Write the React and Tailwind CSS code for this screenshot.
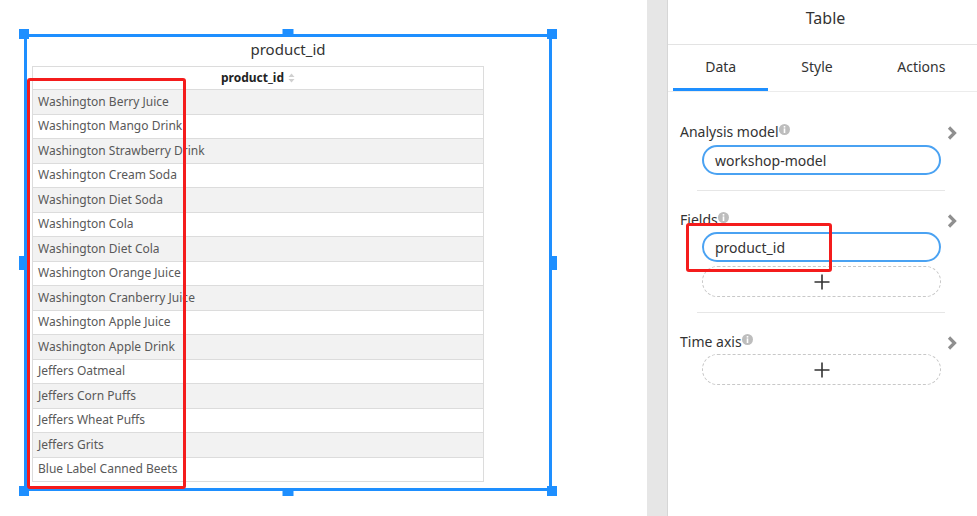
const rows = [
  'Washington Berry Juice',
  'Washington Mango Drink',
  'Washington Strawberry Drink',
  'Washington Cream Soda',
  'Washington Diet Soda',
  'Washington Cola',
  'Washington Diet Cola',
  'Washington Orange Juice',
  'Washington Cranberry Juice',
  'Washington Apple Juice',
  'Washington Apple Drink',
  'Jeffers Oatmeal',
  'Jeffers Corn Puffs',
  'Jeffers Wheat Puffs',
  'Jeffers Grits',
  'Blue Label Canned Beets',
]

function SortIcon() {
  return (
    <svg width="7" height="10" viewBox="0 0 7 10" className="ml-[4px]">
      <path d="M3.5 0.5 L6.5 4 L0.5 4 Z" fill="#d0d0d0" />
      <path d="M3.5 9.5 L6.5 6 L0.5 6 Z" fill="#d0d0d0" />
    </svg>
  )
}

function InfoIcon() {
  return (
    <svg width="11" height="11" viewBox="0 0 11 11" className="-mt-[4px]">
      <circle cx="5.5" cy="5.5" r="5.5" fill="#bdbdbd" />
      <rect x="4.7" y="2" width="1.6" height="1.6" fill="#fff" />
      <rect x="4.7" y="4.4" width="1.6" height="4.6" fill="#fff" />
    </svg>
  )
}

function Chevron() {
  return (
    <svg width="10" height="14" viewBox="0 0 10 14" className="mt-[3px] mr-[8px]">
      <path d="M2 1.5 L7.5 7 L2 12.5" fill="none" stroke="#8f8f8f" strokeWidth="3.2" />
    </svg>
  )
}

function Plus() {
  return (
    <svg width="16" height="16" viewBox="0 0 16 16">
      <path d="M8 0.5 V15.5 M0.5 8 H15.5" stroke="#333" strokeWidth="1.6" />
    </svg>
  )
}

function Label({ text }) {
  return (
    <div className="flex items-center justify-between h-[20px]">
      <div className="flex items-center text-[14px] text-[#333]">
        {text}
        <InfoIcon />
      </div>
      <Chevron />
    </div>
  )
}

function Pill({ children }) {
  return (
    <div className="ml-[22px] w-[239px] h-[30px] rounded-full border-2 border-[#4aa2f2] flex items-center pl-[11px] text-[14px] text-[#333]">
      {children}
    </div>
  )
}

function AddPill({ className }) {
  return (
    <div className={`ml-[22px] w-[239px] h-[31px] rounded-full border border-dashed border-[#c8c8c8] flex items-center justify-center ${className}`}>
      <Plus />
    </div>
  )
}

export default function App() {
  return (
    <div className="flex h-screen w-full bg-white font-['Noto_Sans',sans-serif] overflow-hidden">
      <div className="relative w-[647px] shrink-0">
        <div className="relative ml-[24px] mt-[34px] w-[528px] h-[457px] border-[3px] border-[#1e8fff]">
          <div className="h-[29px] leading-[25px] text-center text-[15px] text-[#333]">product_id</div>
          <div className="ml-[5px] w-[452px] border-x border-t border-[#dcdcdc]">
            <div className="h-[23px] border-b border-[#dcdcdc] flex items-center justify-center text-[12px] font-bold text-[#222]">
              product_id
              <SortIcon />
            </div>
            {rows.map((r, i) => (
              <div
                key={r}
                className={`h-[24.5px] border-b border-[#dcdcdc] flex items-center pl-[5px] text-[12px] text-[#595959] ${i % 2 === 0 ? 'bg-[#f2f2f2]' : 'bg-white'}`}
              >
                {r}
              </div>
            ))}
          </div>

          <div className="absolute -left-[8px] -top-[8px] w-[10px] h-[10px] bg-[#1e8fff]" />
          <div className="absolute left-1/2 -translate-x-1/2 -top-[8px] w-[11px] h-[8px] bg-[#1e8fff]" />
          <div className="absolute -right-[8px] -top-[8px] w-[10px] h-[10px] bg-[#1e8fff]" />
          <div className="absolute -left-[8px] top-1/2 -translate-y-1/2 w-[8px] h-[14px] bg-[#1e8fff]" />
          <div className="absolute -right-[8px] top-1/2 -translate-y-1/2 w-[8px] h-[14px] bg-[#1e8fff]" />
          <div className="absolute -left-[8px] -bottom-[8px] w-[10px] h-[10px] bg-[#1e8fff]" />
          <div className="absolute left-1/2 -translate-x-1/2 -bottom-[8px] w-[11px] h-[8px] bg-[#1e8fff]" />
          <div className="absolute -right-[8px] -bottom-[8px] w-[10px] h-[10px] bg-[#1e8fff]" />
        </div>

        <div className="absolute left-[27px] top-[78px] w-[159px] h-[411px] border-[3px] border-[#f41c1c] rounded-[3px]" />
      </div>

      <div className="w-[21px] shrink-0 bg-[#e6e6e6] border-r border-[#d6d6d6]" />

      <div className="relative w-[309px] shrink-0 bg-white">
        <div className="h-[45px] border-b border-[#e3e3e3] flex items-center justify-center pl-[6px] pb-[8px] text-[16px] text-[#333]">
          Table
        </div>
        <div className="flex h-[47px] border-b border-[#ececec] pl-[5px] text-[14px] text-[#333]">
          <div className="relative w-[96px] flex items-center justify-center pb-[4px]">
            Data
            <div className="absolute left-0 right-0 bottom-0 h-[3px] bg-[#1e8fff]" />
          </div>
          <div className="w-[98px] flex items-center justify-center pb-[4px]">Style</div>
          <div className="w-[112px] flex items-center justify-center pb-[4px]">Actions</div>
        </div>

        <div className="px-[12px] pt-[29px]">
          <Label text="Analysis model" />
          <div className="mt-[4px]">
            <Pill>workshop-model</Pill>
          </div>
          <div className="mt-[15px] ml-[17px] w-[248px] h-px bg-[#e6e6e6]" />

          <div className="mt-[18px]">
            <Label text="Fields" />
          </div>
          <div className="mt-[3px]">
            <Pill>product_id</Pill>
          </div>
          <AddPill className="mt-[4px]" />
          <div className="mt-[15px] ml-[17px] w-[248px] h-px bg-[#e6e6e6]" />

          <div className="mt-[18px]">
            <Label text="Time axis" />
          </div>
          <AddPill className="mt-[3px]" />
        </div>

        <div className="absolute left-[18px] top-[223px] w-[146px] h-[49px] border-[3px] border-[#f41c1c] rounded-[3px]" />
      </div>
    </div>
  )
}
